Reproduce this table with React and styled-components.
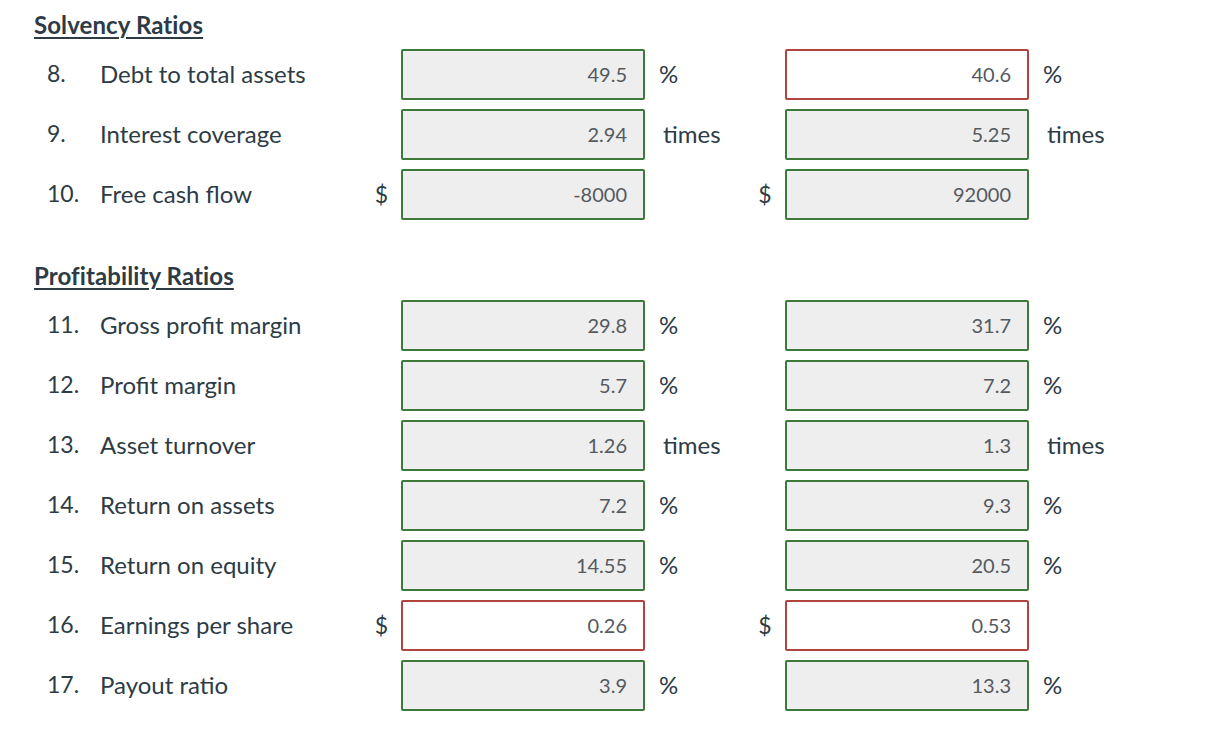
import React from 'react';
import styled, { createGlobalStyle } from 'styled-components';

const GlobalStyle = createGlobalStyle`
  body {
    margin: 0;
    background: #fff;
    font-family: Lato, 'Open Sans', sans-serif;
    color: #2d3b45;
  }
`;

const sections = [
  {
    title: 'Solvency Ratios',
    rows: [
      { n: '8.', label: 'Debt to total assets', a: ['49.5', 'ok'], b: ['40.6', 'bad'], unit: '%' },
      { n: '9.', label: 'Interest coverage', a: ['2.94', 'ok'], b: ['5.25', 'ok'], unit: 'times' },
      { n: '10.', label: 'Free cash flow', dollar: true, a: ['-8000', 'ok'], b: ['92000', 'ok'] },
    ],
  },
  {
    title: 'Profitability Ratios',
    rows: [
      { n: '11.', label: 'Gross profit margin', a: ['29.8', 'ok'], b: ['31.7', 'ok'], unit: '%' },
      { n: '12.', label: 'Profit margin', a: ['5.7', 'ok'], b: ['7.2', 'ok'], unit: '%' },
      { n: '13.', label: 'Asset turnover', a: ['1.26', 'ok'], b: ['1.3', 'ok'], unit: 'times' },
      { n: '14.', label: 'Return on assets', a: ['7.2', 'ok'], b: ['9.3', 'ok'], unit: '%' },
      { n: '15.', label: 'Return on equity', a: ['14.55', 'ok'], b: ['20.5', 'ok'], unit: '%' },
      { n: '16.', label: 'Earnings per share', dollar: true, a: ['0.26', 'bad'], b: ['0.53', 'bad'] },
      { n: '17.', label: 'Payout ratio', a: ['3.9', 'ok'], b: ['13.3', 'ok'], unit: '%' },
    ],
  },
];

function App() {
  return (
    <Page>
      <GlobalStyle />
      {sections.map((s, i) => (
        <Section key={s.title} first={i === 0}>
          <Heading>{s.title}</Heading>
          <Rows>
            {s.rows.map((r) => (
              <Row key={r.n}>
                <Num>{r.n}</Num>
                <Label>{r.label}</Label>
                <Dollar>{r.dollar ? '$' : ''}</Dollar>
                <Answer status={r.a[1]}>{r.a[0]}</Answer>
                <Unit wide={r.unit === 'times'}>{r.unit}</Unit>
                <Dollar>{r.dollar ? '$' : ''}</Dollar>
                <Answer status={r.b[1]}>{r.b[0]}</Answer>
                <Unit wide={r.unit === 'times'}>{r.unit}</Unit>
              </Row>
            ))}
          </Rows>
        </Section>
      ))}
    </Page>
  );
}

const Page = styled.div`
  padding: 10px 0 40px 34px;
  width: 1174px;
`;

const Section = styled.section`
  margin-top: ${(p) => (p.first ? '0' : '41px')};
`;

const Heading = styled.h2`
  margin: 0 0 9px;
  font-size: 24px;
  line-height: 30px;
  font-weight: 700;
  letter-spacing: 0.1px;
  text-decoration: underline;
  text-underline-offset: 3px;
  text-decoration-thickness: 2px;
`;

const Rows = styled.div`
  display: flex;
  flex-direction: column;
  gap: 9px;
`;

const Row = styled.div`
  display: grid;
  grid-template-columns: 53px 265px 36px 244px 103px 37px 244px 80px;
  align-items: center;
  height: 51px;
  padding-left: 13px;
  font-size: 24px;
`;

const Num = styled.span`
  font-size: 23px;
  padding-bottom: 3px;
`;

const Label = styled.span`
  padding-bottom: 3px;
`;

const Dollar = styled.span`
  text-align: center;
  padding-right: 3px;
  padding-bottom: 2px;
  font-size: 23px;
`;

const Answer = styled.div`
  box-sizing: border-box;
  height: 51px;
  border: 2px solid ${(p) => (p.status === 'bad' ? '#b2433f' : '#3c7a3c')};
  background: ${(p) => (p.status === 'bad' ? '#ffffff' : '#eeeeee')};
  border-radius: 2px;
  display: flex;
  align-items: center;
  justify-content: flex-end;
  padding-right: 16px;
  padding-bottom: 1px;
  font-size: 20px;
  color: #555a5e;
`;

const Unit = styled.span`
  padding-left: ${(p) => (p.wide ? '18px' : '14px')};
  padding-bottom: 3px;
`;

export default App;
